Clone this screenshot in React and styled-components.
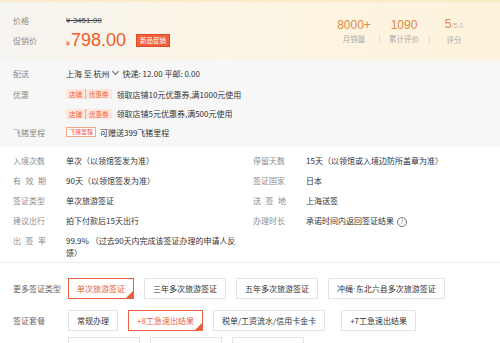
import styled, { createGlobalStyle } from "styled-components";

const GlobalStyle = createGlobalStyle`
  body {
    margin: 0;
    background: #fff;
    font-family: "Noto Sans CJK SC", "Noto Sans", sans-serif;
    color: #333;
  }
`;

const Page = styled.div`
  width: 500px;
  height: 343px;
  overflow: hidden;
  font-size: 8px;
`;

const Banner = styled.div`
  height: 60px;
  box-sizing: border-box;
  padding: 0 13px;
  display: flex;
  justify-content: space-between;
  align-items: center;
  background: linear-gradient(90deg, #f6f4f1 0%, #fcf4e4 45%, #fdf3dc 100%);
  border-top: 2px solid #faecc8;
`;

const PriceBlock = styled.div`
  display: flex;
  flex-direction: column;
`;

const Row = styled.div`
  display: flex;
  align-items: center;
  height: ${(p) => p.h || 20}px;
`;

const Label = styled.span`
  width: ${(p) => p.w || 53}px;
  flex-shrink: 0;
  color: #8c8c8c;
  text-align-last: ${(p) => (p.spread ? "justify" : "auto")};
  padding-right: ${(p) => (p.spread ? 20 : 0)}px;
  box-sizing: border-box;
`;

const OldPrice = styled.span`
  color: #444;
  text-decoration: line-through;
  font-family: "Liberation Sans", sans-serif;
  font-size: 8px;
`;

const Price = styled.span`
  color: #f25a2b;
  font-family: "Liberation Sans", sans-serif;
  display: flex;
  align-items: baseline;
  small {
    font-size: 7px;
    margin-right: 1px;
  }
  b {
    font-weight: normal;
    font-size: 18px;
  }
`;

const NewBadge = styled.span`
  margin-left: 10px;
  background: #f0603a;
  color: #fff;
  font-size: 6.5px;
  line-height: 9px;
  padding: 1px 3px;
  border: 1px solid #e04a25;
`;

const Stats = styled.div`
  display: flex;
  align-items: center;
  margin-right: 8px;
`;

const Stat = styled.div`
  width: 50px;
  display: flex;
  flex-direction: column;
  align-items: center;
  position: relative;
  & + &::before {
    content: "";
    position: absolute;
    left: 0;
    bottom: 1px;
    height: 10px;
    border-left: 1px solid #e8e0d2;
  }
`;

const StatValue = styled.span`
  color: #dd8a45;
  font-family: "Liberation Sans", sans-serif;
  font-size: 12px;
  line-height: 16px;
  small {
    font-size: 7px;
    color: #c9b9a2;
  }
`;

const StatName = styled.span`
  color: #aaa;
  font-size: 7.5px;
  line-height: 12px;
`;

const Service = styled.div`
  background: #f7f7f7;
  padding: 0 13px;
  height: 87px;
  display: flex;
  flex-direction: column;
  padding-top: 2px;
  box-sizing: border-box;
`;

const Value = styled.span`
  color: #333;
  display: flex;
  align-items: center;
`;

const Chevron = styled.span`
  display: inline-block;
  width: 4px;
  height: 4px;
  border-right: 1px solid #666;
  border-bottom: 1px solid #666;
  transform: rotate(45deg);
  margin: -3px 5px 0 3px;
`;

const Coupon = styled.span`
  display: inline-flex;
  background: #fde6db;
  color: #f0603a;
  font-size: 6.5px;
  line-height: 10px;
  margin-right: 5px;
  span {
    padding: 0 3px;
  }
  span + span {
    border-left: 1px dashed #f3a78b;
  }
`;

const MileTag = styled.span`
  border: 1px solid #f3a78b;
  background: #fff;
  color: #f0603a;
  font-size: 6px;
  line-height: 8px;
  padding: 0 2px;
  margin-right: 4px;
`;

const Info = styled.div`
  display: grid;
  grid-template-columns: 240px 1fr;
  padding: 3px 13px 0;
  height: 116px;
  box-sizing: border-box;
  border-bottom: 1px solid #eee;
`;

const InfoCol = styled.div`
  display: flex;
  flex-direction: column;
  min-width: 0;
`;

const InfoRow = styled.div`
  display: flex;
  min-height: 20px;
  align-items: flex-start;
  padding-top: 5px;
  box-sizing: border-box;
  line-height: 12px;
`;

const InfoValue = styled.span`
  display: block;
  color: #333;
  width: 171px;
  flex: none;
  word-break: break-all;
  line-break: anywhere;
`;

const Help = styled.span`
  display: inline-flex;
  align-items: center;
  justify-content: center;
  width: 8px;
  height: 8px;
  border: 1px solid #777;
  border-radius: 50%;
  font-size: 6px;
  line-height: 1;
  color: #666;
  margin-left: 3px;
  vertical-align: middle;
`;

const Options = styled.div`
  padding: 15px 13px 0;
  display: flex;
  flex-direction: column;
  gap: 11px;
`;

const OptionRow = styled.div`
  display: flex;
  align-items: center;
`;

const OptionLabel = styled.span`
  width: 55px;
  flex-shrink: 0;
  color: #666;
`;

const Choices = styled.div`
  display: flex;
  gap: 10px;
`;

const Choice = styled.span`
  position: relative;
  height: 21px;
  box-sizing: border-box;
  padding: 0 8px;
  margin-left: ${(p) => p.shift || 0}px;
  display: flex;
  align-items: center;
  border: 1px solid ${(p) => (p.active ? "#e8603f" : "#e3e3e3")};
  color: ${(p) => (p.active ? "#e8603f" : "#333")};
  background: #fff;
  white-space: nowrap;
  &::after {
    content: "";
    display: ${(p) => (p.active ? "block" : "none")};
    position: absolute;
    right: 0;
    bottom: 0;
    border-style: solid;
    border-width: 0 0 7px 7px;
    border-color: transparent transparent #e8603f transparent;
  }
`;

const Dot = styled.span`
  font-family: "Liberation Sans", sans-serif;
`;

const NextRow = styled.div`
  display: flex;
  gap: 10px;
  padding-left: 55px;
  margin-top: -5px;
  span {
    width: 70px;
    height: 10px;
    border: 1px solid #e3e3e3;
  }
`;

const infoLeft = [
  ["入境次数", "单次（以领馆签发为准）"],
  ["有效期", "90天（以领馆签发为准）", true],
  ["签证类型", "单次旅游签证"],
  ["建议出行", "拍下付款后15天出行"],
  ["出签率", "99.9% （过去90天内完成该签证办理的申请人反馈）", true],
];

const infoRight = [
  ["停留天数", "15天（以领馆或入境边防所盖章为准）"],
  ["签证国家", "日本"],
  ["送签地", "上海送签", true],
  ["办理时长", "承诺时间内返回签证结果", false, true],
];

export default function App() {
  return (
    <Page>
      <GlobalStyle />
      <Banner>
        <PriceBlock>
          <Row h={18}>
            <Label>价格</Label>
            <OldPrice>¥ 3451.00</OldPrice>
          </Row>
          <Row h={22}>
            <Label>促销价</Label>
            <Price>
              <small>¥</small>
              <b>798.00</b>
            </Price>
            <NewBadge>新品促销</NewBadge>
          </Row>
        </PriceBlock>
        <Stats>
          <Stat>
            <StatValue>8000+</StatValue>
            <StatName>月销量</StatName>
          </Stat>
          <Stat>
            <StatValue>1090</StatValue>
            <StatName>累计评价</StatName>
          </Stat>
          <Stat>
            <StatValue>
              5<small>/5.0</small>
            </StatValue>
            <StatName>评分</StatName>
          </Stat>
        </Stats>
      </Banner>

      <Service>
        <Row h={22}>
          <Label>配送</Label>
          <Value>
            上海 至 杭州<Chevron /> 快递: 12.00 平邮: 0.00
          </Value>
        </Row>
        <Row h={20}>
          <Label>优惠</Label>
          <Value>
            <Coupon>
              <span>店铺</span>
              <span>优惠券</span>
            </Coupon>
            领取店铺10元优惠券,满1000元使用
          </Value>
        </Row>
        <Row h={19}>
          <Label />
          <Value>
            <Coupon>
              <span>店铺</span>
              <span>优惠券</span>
            </Coupon>
            领取店铺5元优惠券,满500元使用
          </Value>
        </Row>
        <Row h={18}>
          <Label>飞猪里程</Label>
          <Value>
            <MileTag>飞猪里程</MileTag>
            可赠送399飞猪里程
          </Value>
        </Row>
      </Service>

      <Info>
        <InfoCol>
          {infoLeft.map(([k, v, spread]) => (
            <InfoRow key={k}>
              <Label spread={spread}>{k}</Label>
              <InfoValue>{v}</InfoValue>
            </InfoRow>
          ))}
        </InfoCol>
        <InfoCol>
          {infoRight.map(([k, v, spread, help]) => (
            <InfoRow key={k}>
              <Label spread={spread}>{k}</Label>
              <InfoValue>
                {v}
                {help && <Help>?</Help>}
              </InfoValue>
            </InfoRow>
          ))}
        </InfoCol>
      </Info>

      <Options>
        <OptionRow>
          <OptionLabel>更多签证类型</OptionLabel>
          <Choices>
            <Choice active>单次旅游签证</Choice>
            <Choice>三年多次旅游签证</Choice>
            <Choice>五年多次旅游签证</Choice>
            <Choice>
              冲绳<Dot>·</Dot>东北六县多次旅游签证
            </Choice>
          </Choices>
        </OptionRow>
        <OptionRow>
          <OptionLabel>签证套餐</OptionLabel>
          <Choices>
            <Choice>常规办理</Choice>
            <Choice active>+8工急速出结果</Choice>
            <Choice>税单/工资流水/信用卡金卡</Choice>
            <Choice shift={6}>+7工急速出结果</Choice>
          </Choices>
        </OptionRow>
        <NextRow>
          <span />
          <span />
          <span />
        </NextRow>
      </Options>
    </Page>
  );
}
